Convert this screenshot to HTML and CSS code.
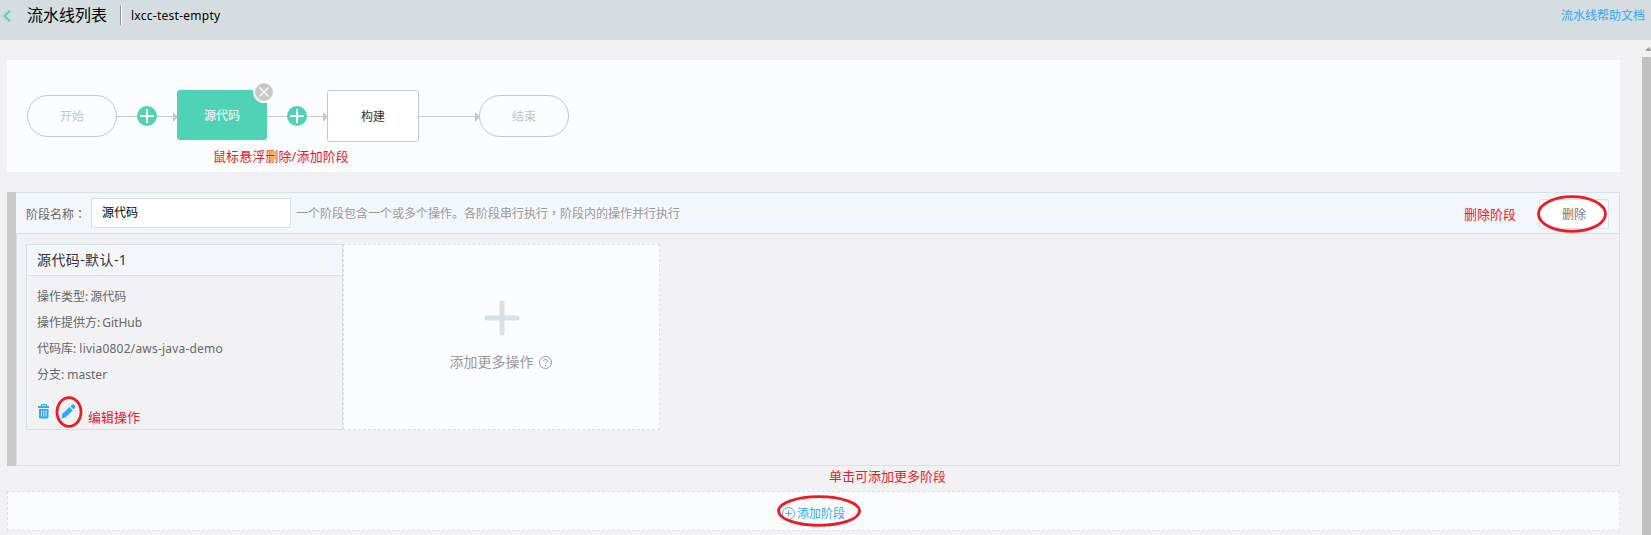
FILE: index.html
```html
<!DOCTYPE html>
<html lang="zh-CN">
<head>
<meta charset="utf-8">
<title>流水线列表</title>
<link rel="stylesheet" href="styles.css">
</head>
<body>
<header class="topbar">
  <svg class="back" width="8" height="12" viewBox="0 0 8 12"><path d="M7 .8 1.5 6 7 11.2"/></svg>
  <h1 class="title">流水线列表</h1>
  <span class="divider"></span>
  <span class="name">lxcc-test-empty</span>
  <a class="help">流水线帮助文档</a>
</header>
<div class="body">
  <main class="content">
    <section class="flow">
      <div class="node pill">开始</div>
      <div class="link"><svg class="plus" width="20" height="20" viewBox="0 0 20 20"><circle cx="10" cy="10" r="10"/><path d="M10 3v14M3 10h14"/></svg></div>
      <div class="node active">源代码
        <svg class="close" width="22" height="22" viewBox="0 0 22 22"><circle cx="11" cy="11" r="10"/><path d="m6.500 6.500 9 9m0-9-9 9"/></svg>
      </div>
      <div class="link"><svg class="plus" width="20" height="20" viewBox="0 0 20 20"><circle cx="10" cy="10" r="10"/><path d="M10 3v14M3 10h14"/></svg></div>
      <div class="node plain">构建</div>
      <div class="link"></div>
      <div class="node pill">结束</div>
      <span class="note note-flow">鼠标悬浮删除/添加阶段</span>
    </section>
    <section class="stage">
      <div class="stage-head">
        <label class="label">阶段名称<span class="mid" lang="zh-TW">：</span></label>
        <div class="input">源代码</div>
        <span class="hint">一个阶段包含一个或多个操作。各阶段串行执行<span class="mid" lang="zh-TW">，</span>阶段内的操作并行执行</span>
        <button class="delete">删除</button>
        <span class="note note-delete">删除阶段</span>
        <svg class="ring ring-delete" width="70" height="38" viewBox="0 0 70 38"><ellipse cx="35" cy="19" rx="33.500" ry="17.300"/></svg>
      </div>
      <div class="cards">
        <article class="card">
          <h2 class="card-title">源代码-默认-1</h2>
          <div class="info">
            <div><span class="key">操作类型:</span>源代码</div>
            <div><span class="key">操作提供方:</span>GitHub</div>
            <div>代码库: <span class="repo">livia0802/aws-java-demo</span></div>
            <div>分支: master</div>
          </div>
          <div class="tools">
            <svg width="12" height="15" viewBox="0 0 12 15"><path class="blue" d="M4 0h4q1 0 1 1v1h2v2H0V2h3V1q0-1 1-1zm0 1v1h4V1zM1 5h9.500v8q0 1.500-1.500 1.500H2.500Q1 14.500 1 13z"/><path class="slots" d="M3.500 6.500v6m2.250-6v6M8 6.500v6"/></svg>
            <svg width="15" height="15" viewBox="0 0 16 16"><path class="blue" d="m.5 15.500 1-5L9 3.300l3.500 3.500L5 14zM10 2.400 11.700.8q1.300-1 2.700.4t.4 2.700L13.400 5.800z"/></svg>
          </div>
          <svg class="ring ring-edit" width="28" height="32" viewBox="0 0 28 32"><ellipse cx="14" cy="16" rx="12" ry="14.300"/></svg>
          <span class="note note-edit">编辑操作</span>
        </article>
        <article class="more">
          <svg width="36" height="36" viewBox="0 0 36 36"><path class="big" d="M18 3v30M3 18h30"/></svg>
          <div class="more-text">添加更多操作<svg width="13" height="13" viewBox="0 0 13 13"><circle class="line" cx="6.500" cy="6.500" r="6"/><path class="line" d="M4.700 5.200C4.700 2.600 8.400 2.700 8.400 5c0 1.400-1.900 1.500-1.900 3M6.500 9v1.200"/></svg></div>
        </article>
      </div>
    </section>
    <section class="add">
      <svg class="add-icon" width="13" height="13" viewBox="0 0 13 13"><circle cx="6.500" cy="6.500" r="6"/><path d="M6.500 3.500v6M3.500 6.500h6"/></svg>
      <span>添加阶段</span>
      <span class="note note-add">单击可添加更多阶段</span>
      <svg class="ring ring-add" width="84" height="32" viewBox="0 0 84 32"><ellipse cx="42" cy="16" rx="40.500" ry="14.300"/></svg>
    </section>
  </main>
  <div class="scroll">
    <svg width="9" height="17" viewBox="0 0 9 17"><path d="M3 11 6.500 7 10 11z"/></svg>
    <div class="thumb"></div>
  </div>
</div>
</body>
</html>
```
FILE: styles.css
```css
* { box-sizing: border-box; }
body {
  margin: 0;
  height: 535px;
  overflow: hidden;
  background: #f2f2f4;
  color: #666;
  font: 12px/18px "Noto Sans", "Noto Sans CJK SC", sans-serif;
}
svg { display: block; fill: none; flex: none; }
span, div, h1, h2, a, label { white-space: nowrap; }

.topbar {
  height: 40px;
  padding: 0 6px 8px 3px;
  display: flex;
  align-items: center;
  background: #d5dde0;
}
.back { stroke: #50d2b6; stroke-width: 2; }
.title { margin: 0 13px 0 16px; font-size: 16px; line-height: 18px; padding-bottom: 2px; font-weight: 400; color: #000; width: 80px; }
.divider { width: 2px; height: 20px; border-left: 1px solid #8f9496; background: #fff; margin: 0 9px 2px 0; }
.name { color: #000; letter-spacing: .27px; }
.help { margin-left: auto; color: #2ea7ff; }

.body { display: flex; height: 495px; }
.content { flex: 1; padding: 20px 22px 0 7px; }

.flow {
  position: relative;
  height: 112px;
  padding: 0 20px;
  display: flex;
  align-items: center;
  background: #fafcfe;
}
.node { width: 90px; padding-top: 2px; display: flex; align-items: center; justify-content: center; }
.pill { height: 42px; border: 1px solid #c6c6d0; border-radius: 21px; color: #c3c4d0; }
.active { position: relative; height: 50px; margin-bottom: 2px; border-radius: 3px; background: #50d2b6; color: #fff; }
.plain { width: 92px; height: 52px; border: 1px solid #c6c6d0; border-radius: 3px; background: #fff; color: #333; }
.link { position: relative; width: 60px; height: 20px; display: flex; justify-content: center; background: linear-gradient(#c6c6d0, #c6c6d0) 0 10px / 100% 1px no-repeat; }
.link::after {
  content: "";
  position: absolute;
  right: -1px;
  top: 6px;
  border: solid transparent;
  border-width: 5px 0 5px 5px;
  border-left-color: #c6c6d0;
}
.plus circle { fill: #50d2b6; }
.plus path { stroke: #fff; stroke-width: 2; }
.close { position: absolute; right: -8px; top: -9px; }
.close circle { fill: #c8c8c8; stroke: #fff; stroke-width: 2; }
.close path { stroke: #fff; stroke-width: 1.2; }

.note { position: absolute; color: #ed1c24; font-size: 13px; line-height: 18px; }
.ring { position: absolute; stroke: #ed1c24; stroke-width: 2.8; }
.note-flow { left: 206px; top: 87px; letter-spacing: .1px; }
.note-delete { right: 103px; top: 12px; }
.ring-delete { right: 12px; top: 2px; }
.note-edit { left: 61px; top: 163px; }
.ring-edit { left: 28px; top: 151px; }
.note-add { left: 821px; top: -25px; }
.ring-add { left: 769px; top: 3px; }

.stage { margin-top: 20px; height: 274px; border: 1px solid #d8e1e8; border-left: 0; position: relative; padding-left: 9px; }
.stage::before { content: ""; position: absolute; left: 0; top: -1px; bottom: -1px; width: 9px; background: #cacaca; border-right: 1px solid #d8e1e8; }
.stage-head {
  position: relative;
  height: 41px;
  padding: 0 10px;
  display: flex;
  align-items: center;
  background: #f3f6fb;
  border-bottom: 1px solid #d8e1e8;
}
.mid { font-family: "Noto Sans CJK TC", sans-serif; line-height: 1; }
.label { width: 65px; padding-top: 3px; }
.input { width: 200px; height: 30px; padding: 5px 10px; background: #fff; border: 1px solid #d8e1e8; color: #000; }
.hint { margin-left: 5px; padding-top: 1px; color: #999; }
.delete { margin: 2px 0 0 auto; width: 70px; height: 30px; padding: 2px 0 0; font: inherit; color: #777; background: #fff; border: 1px solid #d8e1e8; border-radius: 3px; }
.cards { display: flex; padding: 10px; }
.card { position: relative; width: 317px; height: 186px; border: 1px solid #d8e1e8; }
.card-title { margin: 0; height: 31px; padding: 0 10px; font-size: 14px; line-height: 29px; letter-spacing: .4px; font-weight: 400; color: #333; background: #f3f6fb; border-bottom: 1px solid #d8e1e8; }
.info { padding: 8px 10px 0; line-height: 26px; }
.key { margin-right: 2px; }
.repo { letter-spacing: .2px; }
.tools { display: flex; gap: 11px; padding: 16px 11px 0; }
.blue { fill: #2ea7ff; fill-rule: evenodd; }
.slots { stroke: #f2f2f4; stroke-width: 1; }
.more { width: 317px; height: 186px; padding-top: 55px; display: flex; flex-direction: column; align-items: center; gap: 16px; background: #fafcfe; border: 1px dashed #d8e1e8; }
.big { stroke: #d8e1e8; stroke-width: 5; stroke-linecap: round; }
.more-text { display: flex; align-items: center; gap: 5px; margin-right: 2px; font-size: 14px; line-height: 20px; color: #999; }
.line { stroke: #999; }

.add { position: relative; margin-top: 25px; height: 40px; padding-left: 774px; padding-top: 5px; display: flex; align-items: center; gap: 2px; background: #fafcfe; border: 1px dashed #d8e1e8; color: #2ea7ff; }
.add-icon { stroke: #58a9ed; }

.scroll { width: 9px; background: #f1f1f1; }
.scroll path { fill: #a3a3a3; }
.thumb { height: 478px; background: #c1c1c1; }
```
